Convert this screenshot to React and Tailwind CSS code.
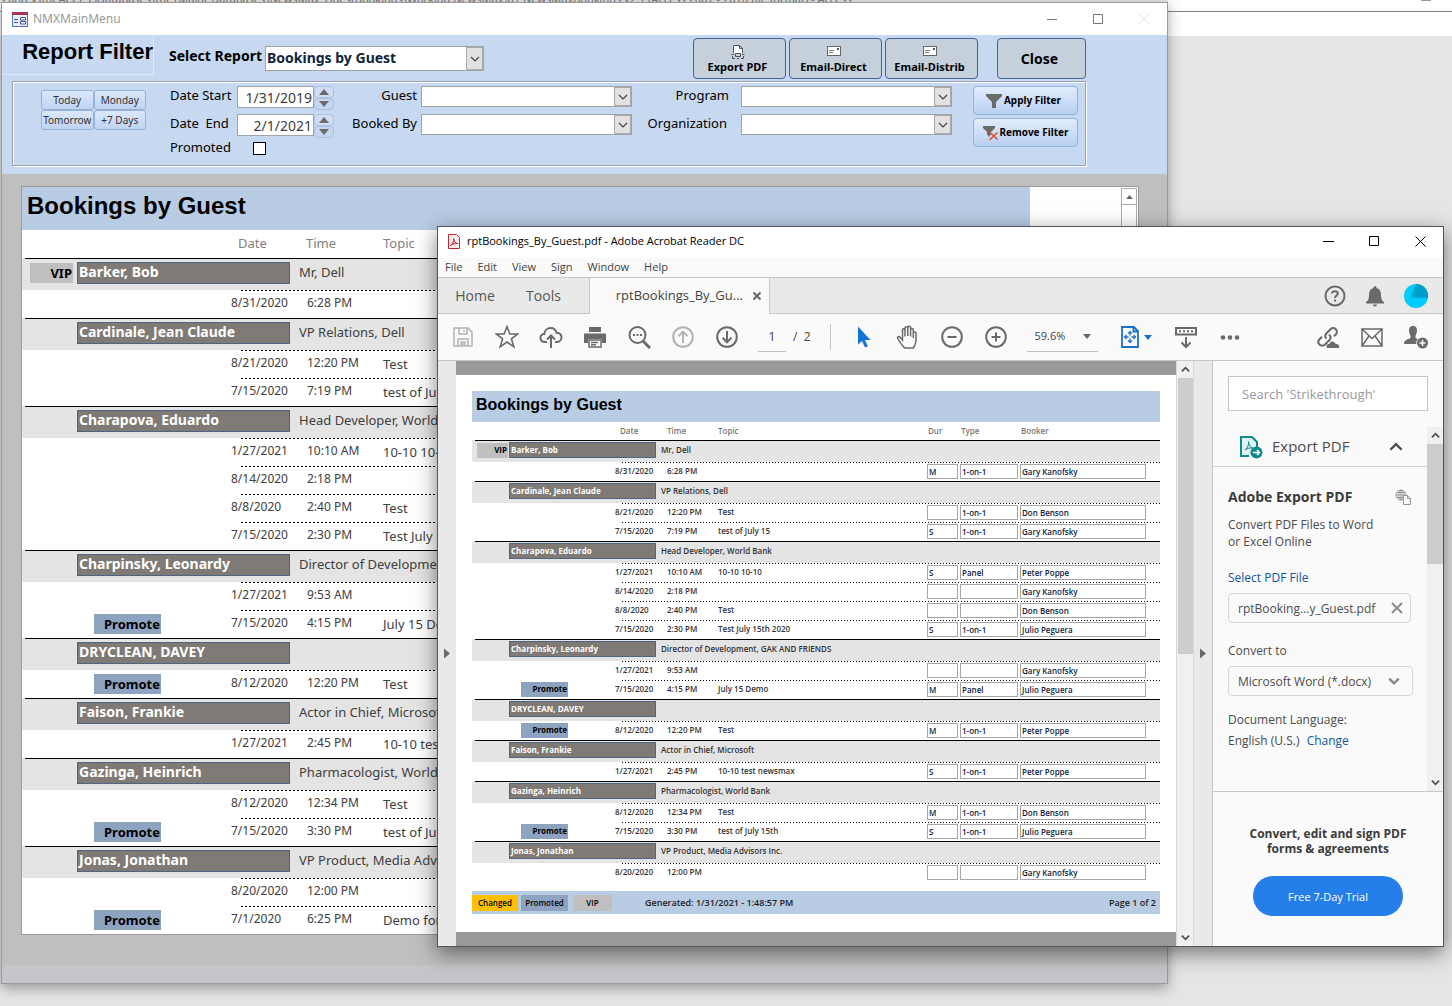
import React, { useState } from "react";

const GUESTS = [
  {
    name: "Barker, Bob",
    role: "Mr, Dell",
    vip: true,
    rows: [{ date: "8/31/2020", time: "6:28 PM", topic: "", dur: "M", type: "1-on-1", booker: "Gary Kanofsky" }],
  },
  {
    name: "Cardinale, Jean Claude",
    role: "VP Relations, Dell",
    rows: [
      { date: "8/21/2020", time: "12:20 PM", topic: "Test", dur: "", type: "1-on-1", booker: "Don Benson" },
      { date: "7/15/2020", time: "7:19 PM", topic: "test of July 15", dur: "S", type: "1-on-1", booker: "Gary Kanofsky" },
    ],
  },
  {
    name: "Charapova, Eduardo",
    role: "Head Developer, World Bank",
    rows: [
      { date: "1/27/2021", time: "10:10 AM", topic: "10-10 10-10", dur: "S", type: "Panel", booker: "Peter Poppe" },
      { date: "8/14/2020", time: "2:18 PM", topic: "", dur: "", type: "", booker: "Gary Kanofsky" },
      { date: "8/8/2020", time: "2:40 PM", topic: "Test", dur: "", type: "", booker: "Don Benson" },
      { date: "7/15/2020", time: "2:30 PM", topic: "Test July 15th 2020", dur: "S", type: "1-on-1", booker: "Julio Peguera" },
    ],
  },
  {
    name: "Charpinsky, Leonardy",
    role: "Director of Development, GAK AND FRIENDS",
    rows: [
      { date: "1/27/2021", time: "9:53 AM", topic: "", dur: "", type: "", booker: "Gary Kanofsky" },
      { date: "7/15/2020", time: "4:15 PM", topic: "July 15 Demo", dur: "M", type: "Panel", booker: "Julio Peguera", promote: true },
    ],
  },
  {
    name: "DRYCLEAN, DAVEY",
    role: "",
    rows: [{ date: "8/12/2020", time: "12:20 PM", topic: "Test", dur: "M", type: "1-on-1", booker: "Peter Poppe", promote: true }],
  },
  {
    name: "Faison, Frankie",
    role: "Actor in Chief, Microsoft",
    rows: [{ date: "1/27/2021", time: "2:45 PM", topic: "10-10 test newsmax", dur: "S", type: "1-on-1", booker: "Peter Poppe" }],
  },
  {
    name: "Gazinga, Heinrich",
    role: "Pharmacologist, World Bank",
    rows: [
      { date: "8/12/2020", time: "12:34 PM", topic: "Test", dur: "M", type: "1-on-1", booker: "Don Benson" },
      { date: "7/15/2020", time: "3:30 PM", topic: "test of July 15th", dur: "S", type: "1-on-1", booker: "Julio Peguera", promote: true },
    ],
  },
  {
    name: "Jonas, Jonathan",
    role: "VP Product, Media Advisors Inc.",
    rows: [
      { date: "8/20/2020", time: "12:00 PM", topic: "", dur: "", type: "", booker: "Gary Kanofsky" },
      { date: "7/1/2020", time: "6:25 PM", topic: "Demo for Sales", dur: "", type: "", booker: "", promote: true },
    ],
  },
];

// The first printed page stops before the last booking
const PAGE_ONE = GUESTS.map((g) => (g.name === "Jonas, Jonathan" ? { ...g, rows: g.rows.slice(0, 1) } : g));

const Chevron = ({ className, up, width = 1.5 }) => (
  <svg viewBox="0 0 10 10" className={className} fill="none" stroke="currentColor" strokeWidth={width}>
    <path d={up ? "M1 7 5 3 9 7" : "M1 3 5 7 9 3"} />
  </svg>
);

const Triangle = ({ className, d = "M0 0H10L5 6Z", box = "0 0 10 6" }) => (
  <svg viewBox={box} className={className} fill="currentColor">
    <path d={d} />
  </svg>
);

/* ---------------- ACCESS WINDOW ---------------- */

const ComboBox = ({ id, children, className = "" }) => (
  <div className={`flex border border-[#a0a4a8] bg-white ${className}`}>
    <select id={id} className="min-w-0 flex-1 appearance-none bg-white pl-px pb-0.5 text-[14px] font-bold leading-5 text-[#0f243e] outline-none">
      {children}
    </select>
    <span className="flex w-[17px] items-center justify-center border border-[#ababab] bg-[#e1e1e1] text-[#444]">
      <Chevron className="h-2.5 w-2.5" width={1.2} />
    </span>
  </div>
);

const QuickButton = ({ children }) => (
  <button className="h-5 rounded-[3px] border border-[#95b3d7] bg-gradient-to-b from-[#dce8fa] to-[#bfd3f2] text-[10px] leading-4 text-[#333]">
    {children}
  </button>
);

const ActionButton = ({ children, className }) => (
  <button className={`flex h-[41px] flex-col items-center justify-center rounded border border-[#3f6496] bg-[#c5d0da] pr-1 font-bold text-black ${className}`}>
    {children}
  </button>
);

const EnvelopeIcon = () => (
  <svg viewBox="0 0 14 10" className="mt-0.5 mb-1 h-[10px] w-[14px]">
    <rect x=".5" y=".5" width="13" height="9" fill="#fff" stroke="#666" />
    <path d="M2 4.5H7M2 6.5H6" stroke="#777" />
    <rect x="10" y="2" width="2" height="2" fill="#555" />
  </svg>
);

const DateField = ({ id, value, onStep, onChange }) => (
  <div className="flex h-[25px] items-start">
    <input id={id} value={value} onChange={onChange} className="h-[22px] w-[77px] border border-[#a0a4a8] bg-white pr-px text-right text-[14px] leading-5 text-[#404040] outline-none" />
    <div className="flex w-5 flex-col text-[#6b6b6b]">
      <button aria-label="Next day" onClick={onStep} className="flex h-3 items-center justify-center rounded-sm border border-[#a9c0e0] bg-[#d0def3]">
        <Triangle className="h-1.5 w-2.5" d="M5 0 10 6H0Z" />
      </button>
      <button aria-label="Previous day" onClick={onStep} className="flex h-3 items-center justify-center rounded-sm border border-[#a9c0e0] bg-[#c4d6f0]">
        <Triangle className="h-1.5 w-2.5" />
      </button>
    </div>
  </div>
);

const ReportForm = () => {
  const [start, setStart] = useState("1/31/2019");
  const [end, setEnd] = useState("2/1/2021");
  const [promoted, setPromoted] = useState(false);

  return (
    <div className="bg-[#c6d9f0] pb-2">
      <div className="max-w-[1084px]">
        <div className="flex h-[46px] items-start">
          <h1 className="h-10 w-[152px] shrink-0 whitespace-nowrap border-r border-b border-[#dfe9f6] text-right font-['Liberation_Sans_Narrow','Liberation_Sans',sans-serif] text-[22px] font-bold leading-[34px] text-black">
            Report Filter
          </h1>
          <label htmlFor="report" className="ml-[15px] w-24 shrink-0 whitespace-nowrap pt-[11px] text-[14px] font-bold leading-5">
            Select Report
          </label>
          <ComboBox id="report" className="mt-[11px] h-[25px] w-[219px]">
            <option>Bookings by Guest</option>
          </ComboBox>
          <div className="ml-auto flex gap-[3px] pt-[3px] text-[11px] leading-[13px]">
            <ActionButton className="w-[93px]">
              <svg viewBox="0 0 14 14" className="mb-px h-[14px] w-[14px]" fill="none" stroke="#555">
                <path d="M2.500 8V.5H8.500L11.500 3.500V8M8.500.500V3.500H11.500" fill="#fff" />
                <path d="M.5 9.500H3M11 9.500H13.500M4.500 8.500H9.500V11.500H4.500ZM1.500 11V13.500H4M12.500 11V13.500H10M6 13.500H8" />
              </svg>
              Export PDF
            </ActionButton>
            <ActionButton className="w-[93px]">
              <EnvelopeIcon />
              Email-Direct
            </ActionButton>
            <ActionButton className="w-[93px]">
              <EnvelopeIcon />
              Email-Distrib
            </ActionButton>
            <ActionButton className="ml-4 w-[89px] text-[14px]">Close</ActionButton>
          </div>
        </div>

        <div className="ml-2.5 flex h-[85px] border border-[#9aa3ad] pt-1 pl-7 shadow-[inset_1px_1px_0_#fff,1px_1px_0_#fff]">
          <div className="mt-1 grid h-10 w-[105px] shrink-0 grid-cols-2">
            <QuickButton>Today</QuickButton>
            <QuickButton>Monday</QuickButton>
            <QuickButton>Tomorrow</QuickButton>
            <QuickButton>+7 Days</QuickButton>
          </div>

          <div className="ml-6 grid shrink-0 grid-cols-[67px_97px] grid-rows-[28px_28px_20px] text-[13px] leading-[19px]">
            <label htmlFor="start">Date Start</label>
            <DateField id="start" value={start} onChange={(e) => setStart(e.target.value)} />
            <label htmlFor="end" className="whitespace-pre">Date  End</label>
            <DateField id="end" value={end} onChange={(e) => setEnd(e.target.value)} />
            <label htmlFor="promoted" className="-mt-1">Promoted</label>
            <input id="promoted" type="checkbox" checked={promoted} onChange={() => setPromoted(!promoted)} className="ml-4 h-[13px] w-[13px] appearance-none border border-black bg-white" />
          </div>

          <div className="ml-[13px] grid shrink-0 grid-cols-[70px_211px] grid-rows-[28px_28px] gap-x-1 text-right text-[13px] leading-[19px]">
            <label htmlFor="guest">Guest</label>
            <ComboBox id="guest" className="h-[21px]" />
            <label htmlFor="booked">Booked By</label>
            <ComboBox id="booked" className="h-[21px]" />
          </div>

          <div className="ml-[13px] grid shrink-0 grid-cols-[84px_211px] grid-rows-[28px_28px] gap-x-3 text-right text-[13px] leading-[19px]">
            <label htmlFor="program">Program</label>
            <ComboBox id="program" className="h-[21px]" />
            <label htmlFor="org" className="mr-0.5">Organization</label>
            <ComboBox id="org" className="h-[21px]" />
          </div>

          <div className="mr-[7px] ml-auto flex w-[105px] flex-col gap-[3px] text-[10px] font-bold">
            <button className="flex h-[29px] items-center justify-center gap-0.5 whitespace-nowrap rounded border border-[#95b3d7] bg-gradient-to-b from-[#e2ecfb] to-[#b9d0f3] pr-1">
              <svg viewBox="0 0 16 16" className="h-4 w-4" fill="#6b6b6b"><path d="M0 1H16V3L10 9V15H6V9L0 3Z" /></svg>
              Apply Filter
            </button>
            <button className="flex h-[29px] items-center justify-center gap-px whitespace-nowrap rounded border border-[#95b3d7] bg-gradient-to-b from-[#e2ecfb] to-[#b9d0f3]">
              <svg viewBox="0 0 16 16" className="h-4 w-4">
                <path d="M0 1H12V3L8 7V9L6 12L4 9V7L0 3Z" fill="#6b6b6b" />
                <path d="M6.500 7 14.500 14.500M14.500 7.500 6.500 15" stroke="#d8542f" strokeWidth="1.600" />
              </svg>
              Remove Filter
            </button>
          </div>
        </div>
      </div>
    </div>
  );
};

const ScreenReport = () => (
  <div className="mt-3 mr-[28px] ml-[19px] flex border border-[#9b9b9b] bg-white">
    <div className="min-w-0 flex-1 pr-[90px]">
      <h2 className="h-[43px] bg-[#b8cce4] pl-[5px] font-['Liberation_Sans',sans-serif] text-[24px] font-bold leading-[38px] text-black">Bookings by Guest</h2>
      <table className="w-full table-fixed border-collapse text-left text-[13px] leading-5 text-[#404040]">
        <colgroup>
          <col className="w-[55px]" />
          <col className="w-[154px]" />
          <col className="w-[68px]" />
          <col className="w-[84px]" />
          <col />
        </colgroup>
        <thead>
          <tr className="h-7 align-top text-[#7f7f7f]">
            <th /><th />
            <th className="pt-[3px] pl-[7px] font-normal">Date</th>
            <th className="pt-[3px] pl-[7px] font-normal">Time</th>
            <th className="pt-[3px] font-normal">Topic</th>
          </tr>
        </thead>
        <tbody>
          {GUESTS.map((g) => (
            <React.Fragment key={g.name}>
              <tr className="h-8 whitespace-nowrap bg-[#e4e4e4] bg-[linear-gradient(#000,#000)] bg-[length:100%_1px] bg-[position:3px_0] bg-no-repeat align-top">
                <td className="pt-[5px] pl-2">
                  {g.vip && <div className="h-5 w-[43px] bg-[#bfbfbf] pr-px text-right font-bold text-black">VIP</div>}
                </td>
                <td colSpan={2} className="pt-1 pr-[9px]">
                  <div className="h-[22px] border border-[#4f6480] bg-[#7f7a75] pl-px text-[14px] font-bold leading-[18px] text-white">{g.name}</div>
                </td>
                <td colSpan={2} className="pt-1">{g.role}</td>
              </tr>
              {g.rows.map((r) => (
                <tr key={r.date} className="h-7 whitespace-nowrap bg-[repeating-linear-gradient(90deg,#000_0_2px,transparent_2px_4px)] bg-[length:100%_1px] bg-[position:219px_0] bg-no-repeat align-top">
                  <td />
                  <td className="pt-1 pl-[17px]">
                    {r.promote && <div className="h-5 w-[67px] bg-[#8ea3c0] pr-px text-right font-bold text-black">Promote</div>}
                  </td>
                  <td className="pt-[3px] text-[12px]">{r.date}</td>
                  <td className="pt-[3px] pl-2 text-[12px]">{r.time}</td>
                  <td className="pt-1">{r.topic}</td>
                </tr>
              ))}
            </React.Fragment>
          ))}
        </tbody>
      </table>
    </div>
    <div className="m-px flex w-4 flex-col border border-[#ababab] bg-white">
      <button aria-label="Scroll up" className="flex h-4 items-center justify-center border-b border-[#ababab] text-[#606060]">
        <Triangle className="h-1 w-[7px]" d="M5 0 10 6H0Z" />
      </button>
    </div>
  </div>
);

const AccessWindow = () => (
  <section className="absolute top-0.5 right-[284px] left-px border border-[#9a9a9a] bg-[#bfbfbf] shadow-[0_4px_12px_rgba(0,0,0,0.35)]">
    <header className="flex h-8 items-center bg-white pl-2.5">
      <svg viewBox="0 0 16 15" className="h-[15px] w-4">
        <rect x=".5" y=".5" width="15" height="14" fill="#e8eefa" stroke="#5a6fae" />
        <path d="M0 1.500H16" stroke="#a8325a" strokeWidth="3" />
        <path d="M2 7.500H6M2 10.500H6" stroke="#41559c" />
        <path d="M8.500 5.500H13.500V8H8.500ZM8.500 9.500H13.500V12H8.500Z" fill="#fff" stroke="#41559c" />
      </svg>
      <span className="ml-[5px] text-[12px] text-[#999]">NMXMainMenu</span>
      <div className="mr-[18px] ml-auto flex items-center gap-9 text-[#777]">
        <button aria-label="Minimize"><svg viewBox="0 0 10 10" className="h-2.5 w-2.5" stroke="currentColor"><path d="M0 5.500H10" /></svg></button>
        <button aria-label="Maximize"><svg viewBox="0 0 10 10" className="h-2.5 w-2.5" stroke="currentColor" fill="none"><path d="M.5.5H9.500V9.500H.5Z" /></svg></button>
        <button aria-label="Close window" className="text-[#e2e2e2]"><svg viewBox="0 0 10 10" className="h-2.5 w-2.5" stroke="currentColor"><path d="M0 0 10 10M10 0 0 10" /></svg></button>
      </div>
    </header>
    <ReportForm />
    <ScreenReport />
    <div className="mt-[30px] h-[18px] bg-[#c4c6ca]" />
  </section>
);

/* ---------------- ACROBAT WINDOW ---------------- */

const Tool = ({ label, children, className = "w-11", faded }) => (
  <button aria-label={label} className={`flex shrink-0 items-center justify-center ${faded ? "text-[#b3b3b3]" : "text-[#6a6a6a]"} ${className}`}>
    <svg viewBox="0 0 24 24" className="h-6 w-6" fill="none" stroke="currentColor" strokeWidth="2">
      {children}
    </svg>
  </button>
);

const Toolbar = () => (
  <div className="flex h-[47px] items-stretch border-b border-[#c8c8c8] bg-[#fafafa] pl-[3px] text-[12px] text-[#444]">
    <Tool label="Save" faded>
      <path d="M3 3H17L21 7V21H3ZM8 3V9H16V3M7 21V14H17V21M9 17H15M9 19H15M13 5V7" strokeWidth="1.500" />
    </Tool>
    <Tool label="Bookmark">
      <path d="M12 1.500 14.800 9H22.800L16.400 13.800 18.800 21.800 12 17 5.200 21.800 7.600 13.800 1.200 9H9.200Z" strokeWidth="1.600" />
    </Tool>
    <Tool label="Upload">
      <path d="M8 17H6C3 17 1.500 15 1.500 12.800 1.500 10.500 3.300 9 5.300 9 5.500 5.300 8.300 3 11.500 3 14.600 3 16.800 4.800 17.500 7.800 20.500 7.500 22.500 9.800 22.500 12.300 22.500 15 20.500 17 18 17H16M12 23V11M8 14.500 12 10.500 16 14.500" />
    </Tool>
    <Tool label="Print">
      <path d="M6 2H18V7H6Z" fill="currentColor" stroke="none" />
      <path d="M1 8.500H23V18H19V14H5V18H1Z" fill="currentColor" stroke="none" />
      <path d="M6 15H18V22H6ZM8 17.500H15M8 19.800H13" strokeWidth="1.500" />
    </Tool>
    <Tool label="Find">
      <circle cx="10.500" cy="10" r="8" />
      <path d="M16 16 23 23" strokeWidth="3" />
      <path d="M6 10H8M9.500 10H11.500M13 10H15" />
    </Tool>
    <Tool label="Previous page" faded>
      <circle cx="12" cy="12" r="9.800" />
      <path d="M12 18V7M7.500 11.200 12 6.700 16.500 11.200" />
    </Tool>
    <Tool label="Next page">
      <circle cx="12" cy="12" r="9.800" />
      <path d="M12 6V17M7.500 12.800 12 17.300 16.500 12.800" />
    </Tool>
    <input aria-label="Page" defaultValue="1" className="mt-2 mb-2 ml-[9px] w-7 border-b border-[#c0c0c0] bg-transparent text-center outline-none" />
    <span className="ml-[7px] self-center whitespace-pre">/  2</span>
    <span className="mr-[18px] ml-[19px] my-2.5 w-px shrink-0 bg-[#c8c8c8]" />
    <Tool label="Select" className="-ml-[7px] w-11">
      <path d="M6 1.500V19.500L10 16 13 22.500 15.800 21.200 13 15H18.500Z" fill="#1473d6" stroke="none" />
    </Tool>
    <Tool label="Hand">
      <path d="M8.500 23C5 19 3.500 17 1.700 13.500 1 12 2.800 10.800 4 12.200L6.500 15V5C6.500 3.300 9 3.300 9 5V11.500 3C9 1.200 11.800 1.200 11.800 3V11 2.500C11.800.8 14.600.8 14.600 2.500V11.500 4.500C14.600 3 17.300 3 17.300 4.500V13 8C17.300 6.500 20 6.500 20 8V15C20 19 18.500 20.500 17.500 23Z" strokeWidth="1.500" />
    </Tool>
    <Tool label="Zoom out">
      <circle cx="12" cy="12" r="9.800" />
      <path d="M7.500 12H16.500" />
    </Tool>
    <Tool label="Zoom in">
      <circle cx="12" cy="12" r="9.800" />
      <path d="M7.500 12H16.500M12 7.500V16.500" />
    </Tool>
    <div className="my-2 ml-[9px] flex w-[71px] items-center border-b border-[#c0c0c0] pl-2">
      <input aria-label="Zoom level" defaultValue="59.6%" className="w-[46px] bg-transparent text-[11px] outline-none" />
      <Triangle className="ml-0.5 h-[5px] w-2 text-[#666]" />
    </div>
    <button aria-label="Fit page" className="ml-[22px] flex items-center gap-1 text-[#1b6fc8]">
      <svg viewBox="0 0 20 24" className="h-6 w-5" fill="none" stroke="currentColor" strokeWidth="1.800">
        <path d="M2 2H14L18 6V22H2ZM13.500 2V6.500H18" />
        <path d="M10 7V17M5 12H15" strokeDasharray="3.500 3" strokeWidth="1.400" />
        <path d="M8 8.500 10 6.500 12 8.500M8 15.500 10 17.500 12 15.500M6.500 10 4.500 12 6.500 14M13.500 10 15.500 12 13.500 14" strokeWidth="1.200" />
      </svg>
      <Triangle className="h-[5px] w-2" />
    </button>
    <Tool label="Read mode" className="ml-3 w-11">
      <path d="M2 3H22V9.500H2ZM5 6.200H7M9 6.200H11M13 6.200H15M17 6.200H19" />
      <path d="M12 12V22M7.500 17.500 12 22 16.500 17.500" />
    </Tool>
    <Tool label="More tools">
      <circle cx="5" cy="12.500" r="2.300" fill="currentColor" stroke="none" />
      <circle cx="12" cy="12.500" r="2.300" fill="currentColor" stroke="none" />
      <circle cx="19" cy="12.500" r="2.300" fill="currentColor" stroke="none" />
    </Tool>
    <div className="mr-[5px] ml-auto flex">
      <Tool label="Share link">
        <path d="M10.500 13.500C8.500 11.500 9 9.800 10.500 8.200L14.500 4.200C16 2.700 18.300 2.700 19.800 4.200 21.300 5.700 21.300 8 19.800 9.500L18 11.300M13 9.500C15 11.500 15 13.500 13.500 15L9 19.500C7.500 21 5 21 3.500 19.500 2 18 2 15.800 3.500 14.300L6 11.800" />
        <path d="M11 23C9.500 20 12 18.500 13.500 19 14.500 15.500 19 16 19.500 19 22 18.500 24 20.500 23 23Z" fill="currentColor" stroke="none" />
      </Tool>
      <Tool label="Send by email">
        <path d="M2 4H22V21H2ZM2 4 12 13.500 22 4M2 21 9 11M22 21 15 11" strokeWidth="1.500" />
      </Tool>
      <Tool label="Share with people">
        <path d="M9 1C12 1 13 3 13 5.500 13 8 12 9.500 11.500 10.500V13L14 14.200C12 16 12 18 12.500 19H0C0 14.500 4 14.500 6.500 13V10.500C6 9.500 5 8 5 5.500 5 3 6 1 9 1Z" fill="currentColor" stroke="none" />
        <circle cx="18.500" cy="18" r="5.500" fill="currentColor" stroke="none" />
        <path d="M18.500 15V21M15.500 18H21.500" stroke="#fafafa" strokeWidth="1.500" />
      </Tool>
    </div>
  </div>
);

const Cell = ({ children }) => (
  <div className="h-[15px] border border-[#a6a6a6] bg-white pl-px leading-[14px] text-[#0f243e]">{children}</div>
);

const PrintedPage = () => (
  <div className="bg-white px-4 pt-4 pb-[18px] font-['Open_Sans',sans-serif]">
    <h2 className="h-[31px] bg-[#b8cce4] pl-1 font-['Liberation_Sans',sans-serif] text-[16px] font-bold leading-[27px] text-black">Bookings by Guest</h2>
    <table className="w-full table-fixed border-collapse text-left text-[8px] font-semibold leading-[14px] text-[#333]">
      <colgroup>
        <col className="w-[37px]" />
        <col className="w-[106px]" />
        <col className="w-[46px]" />
        <col className="w-[57px]" />
        <col />
        <col className="w-[33px]" />
        <col className="w-[60px]" />
        <col className="w-[140px]" />
      </colgroup>
      <thead>
        <tr className="h-[18px] text-[#777]">
          <th /><th />
          <th className="pl-[5px] font-semibold">Date</th>
          <th className="pl-1.5 font-semibold">Time</th>
          <th className="font-semibold">Topic</th>
          <th className="pl-px font-semibold">Dur</th>
          <th className="pl-px font-semibold">Type</th>
          <th className="pl-px font-semibold">Booker</th>
        </tr>
      </thead>
      <tbody>
        {PAGE_ONE.map((g) => (
          <React.Fragment key={g.name}>
            <tr className="h-[22px] whitespace-nowrap bg-[#e4e4e4] bg-[linear-gradient(#000,#000)] bg-[length:100%_1px] bg-[position:3px_0] bg-no-repeat align-top">
              <td className="pt-[3px] pl-[5px]">
                {g.vip && <div className="h-[15px] w-[31px] bg-[#bfbfbf] pr-px text-right font-bold text-black">VIP</div>}
              </td>
              <td colSpan={2} className="pt-0.5 pr-[5px]">
                <div className="h-4 border border-[#4f6480] bg-[#7f7a75] pl-px font-bold text-white">{g.name}</div>
              </td>
              <td colSpan={5} className="pt-[3px]">{g.role}</td>
            </tr>
            {g.rows.map((r) => (
              <tr key={r.date} className="h-[19px] whitespace-nowrap bg-[repeating-linear-gradient(90deg,#000_0_1px,transparent_1px_3px)] bg-[length:100%_1px] bg-[position:150px_0] bg-no-repeat align-top">
                <td />
                <td className="pt-0.5 pl-3">
                  {r.promote && <div className="h-[15px] w-[47px] bg-[#8ea3c0] pr-px text-right font-bold text-black">Promote</div>}
                </td>
                <td className="pt-0.5">{r.date}</td>
                <td className="pt-0.5 pl-1.5">{r.time}</td>
                <td className="pt-0.5">{r.topic}</td>
                <td className="pt-0.5 pr-0.5"><Cell>{r.dur}</Cell></td>
                <td className="pt-0.5 pr-0.5"><Cell>{r.type}</Cell></td>
                <td className="pt-0.5 pr-3.5"><Cell>{r.booker}</Cell></td>
              </tr>
            ))}
          </React.Fragment>
        ))}
      </tbody>
    </table>
    <footer className="mt-[9px] flex h-[23px] items-center bg-[#b8cce4] pr-1 text-[9px] font-semibold text-[#222]">
      <span className="w-[46px] bg-[#ffc000] text-center text-[8px] leading-4 text-black">Changed</span>
      <span className="ml-[3px] w-[47px] bg-[#8ea3c0] text-center text-[8px] leading-4 text-black">Promoted</span>
      <span className="ml-[5px] w-[39px] bg-[#bfbfbf] text-center text-[8px] leading-4 text-black">VIP</span>
      <span className="ml-[33px]">Generated: 1/31/2021 - 1:48:57 PM</span>
      <span className="ml-auto">Page 1 of 2</span>
    </footer>
  </div>
);

const ScrollBar = ({ thumb, className = "w-4" }) => (
  <div className={`flex shrink-0 flex-col bg-[#f0f0f0] text-[#505050] ${className}`}>
    <button aria-label="Scroll up" className="flex h-[17px] items-center justify-center"><Chevron up className="h-[9px] w-[9px]" width={2} /></button>
    <div className={`bg-[#cdcdcd] ${thumb}`} />
    <button aria-label="Scroll down" className="mt-auto flex h-[17px] items-center justify-center"><Chevron className="h-[9px] w-[9px]" width={2} /></button>
  </div>
);

const SideArrow = ({ className = "w-[18px]" }) => (
  <button aria-label="Toggle pane" className={`flex shrink-0 items-center justify-center bg-[#e9e9e9] text-[#6a6a6a] ${className}`}>
    <Triangle className="h-[11px] w-1.5" d="M0 0 6 5 0 10Z" box="0 0 6 10" />
  </button>
);

const ToolsPane = () => (
  <aside className="flex w-[231px] shrink-0 flex-col border-l border-[#c8c8c8] bg-[#fafafa] text-[12px] leading-[17px] text-[#4b4b4b]">
    <div className="pt-[15px] pr-[15px] pb-4 pl-[15px]">
      <input aria-label="Search tools" placeholder="Search 'Strikethrough'" className="h-[35px] w-full border border-[#c6c6c6] bg-white pl-[13px] text-[13px] outline-none placeholder:text-[#999]" />
    </div>
    <div className="flex h-[364px]">
      <div className="flex-1">
        <button className="flex h-10 w-full items-center border-b border-[#d0d0d0] pl-[26px] text-[15px]">
          <svg viewBox="0 0 24 24" className="h-6 w-6" fill="none" stroke="#12898c" strokeWidth="2">
            <path d="M10 21H2V2H13L18 7V12" fill="#e0f2f2" />
            <path d="M6 15C9 13 10 9 9.500 6.500 9.500 10 12 13 14 13 11 12.500 8 13.500 6 15Z" strokeWidth="1" />
            <circle cx="17.500" cy="17.500" r="6" fill="#12898c" stroke="none" />
            <path d="M14 17.500H20.500M18 15 20.500 17.500 18 20" stroke="#fff" strokeWidth="1.500" />
          </svg>
          <span className="ml-[9px]">Export PDF</span>
          <Chevron up className="mr-6 ml-auto h-3.5 w-3.5" width={1.6} />
        </button>
        <div className="pl-[15px]">
          <div className="mt-[21px] flex items-center">
            <h3 className="text-[14px] font-bold leading-[18px] text-[#3c3c3c]">Adobe Export PDF</h3>
            <svg viewBox="0 0 16 16" className="mr-4 ml-auto h-4 w-4" fill="none" stroke="#999">
              <circle cx="6" cy="6" r="5" />
              <path d="M1 6H11M6 1V11M2 3.500H10M2 8.500H8M6 1C3 4 3 8 6 11M6 1C9 4 9 8 6 11" />
              <path d="M8.500 6.500H12.500L15.500 9.500V15.500H8.500ZM12.500 6.500V9.500H15.500" fill="#fafafa" />
            </svg>
          </div>
          <p className="mt-2.5">Convert PDF Files to Word<br />or Excel Online</p>
          <a href="#select" className="mt-[19px] block text-[#13569b]">Select PDF File</a>
          <div className="mt-[7px] flex h-[30px] w-[183px] items-center rounded border border-[#d8d8d8] pl-[9px]">
            rptBooking...y_Guest.pdf
            <button aria-label="Remove file" className="mr-[7px] ml-auto text-[#888]">
              <svg viewBox="0 0 12 12" className="h-3 w-3" stroke="currentColor" strokeWidth="1.800"><path d="M1 1 11 11M11 1 1 11" /></svg>
            </button>
          </div>
          <label htmlFor="format" className="mt-[19px] block">Convert to</label>
          <div className="mt-[7px] flex h-[30px] w-[185px] items-center rounded border border-[#d8d8d8] pr-3 pl-[9px]">
            <select id="format" className="min-w-0 flex-1 appearance-none bg-transparent outline-none">
              <option>Microsoft Word (*.docx)</option>
            </select>
            <Chevron className="h-3 w-3 text-[#888]" width={2} />
          </div>
          <p className="mt-[13px] leading-[21px]">
            Document Language:<br />
            English (U.S.) <a href="#language" className="ml-1 text-[#13569b]">Change</a>
          </p>
        </div>
      </div>
      <ScrollBar thumb="h-[120px]" />
    </div>
    <div className="flex flex-1 flex-col items-center border-t border-[#c8c8c8] pt-[34px] text-center">
      <p className="text-[12px] font-bold leading-[15px] text-[#3c3c3c]">Convert, edit and sign PDF<br />forms &amp; agreements</p>
      <button className="mt-5 h-10 w-[150px] rounded-full bg-[#267fe8] text-[11px] text-white">Free 7-Day Trial</button>
    </div>
  </aside>
);

const AcrobatWindow = () => (
  <section className="absolute top-[226px] right-2 left-[437px] border border-[#555] bg-white font-['Open_Sans',sans-serif] shadow-[0_6px_20px_rgba(0,0,0,0.5)]">
    <header className="flex h-[31px] items-center pl-2.5 pb-[3px] text-[12px] text-black">
      <svg viewBox="0 0 12 15" className="h-[15px] w-3" fill="none" stroke="#c9252d">
        <path d="M.5.500H8.500L11.500 3.500V14.500H.5Z" fill="#fbecec" />
        <path d="M2.500 11.500C5 10 6.300 7 5.700 4.500 5.800 7.500 7.500 9.500 9.800 9.500 7 9 4.500 10 2.500 11.500Z" />
      </svg>
      <span className="ml-[7px] text-[11px]">rptBookings_By_Guest.pdf - Adobe Acrobat Reader DC</span>
      <div className="mr-[17px] ml-auto flex items-center gap-[35px]">
        <button aria-label="Minimize"><svg viewBox="0 0 11 11" className="h-[11px] w-[11px]" stroke="currentColor"><path d="M0 5.500H11" /></svg></button>
        <button aria-label="Maximize"><svg viewBox="0 0 11 11" className="h-[11px] w-[11px]" stroke="currentColor" fill="none"><path d="M.500.500H9.500V9.500H.500Z" /></svg></button>
        <button aria-label="Close window"><svg viewBox="0 0 11 11" className="h-[11px] w-[11px]" stroke="currentColor"><path d="M.5.500 10.500 10.500M10.500.500.500 10.500" /></svg></button>
      </div>
    </header>
    <nav className="flex h-5 items-center gap-[15px] border-b border-[#c8c8c8] bg-[#f9f9f9] pl-[7px] text-[11px] text-[#444]">
      <button>File</button>
      <button>Edit</button>
      <button>View</button>
      <button>Sign</button>
      <button>Window</button>
      <button>Help</button>
    </nav>
    <div className="flex h-9 items-stretch bg-[#e9e9e9] text-[14px] text-[#555]">
      <button className="w-[74px] border-b border-[#c8c8c8]">Home</button>
      <button className="w-[77px] border-b border-[#c8c8c8] pr-3.5">Tools</button>
      <div className="flex w-[181px] items-center justify-end border-x border-[#c8c8c8] bg-[#fafafa] pr-2 text-[13px] text-[#444]">
        rptBookings_By_Gu...
        <button aria-label="Close tab" className="ml-2.5">
          <svg viewBox="0 0 8 8" className="h-2 w-2" stroke="#666" strokeWidth="2"><path d="M.5.500 7.500 7.500M7.500.500.500 7.500" /></svg>
        </button>
      </div>
      <div className="flex flex-1 items-center justify-end gap-[19px] border-b border-[#c8c8c8] pr-[15px] text-[#6a6a6a]">
        <button aria-label="Help">
          <svg viewBox="0 0 22 22" className="h-[22px] w-[22px]" fill="none" stroke="currentColor" strokeWidth="2">
            <circle cx="11" cy="11" r="9.500" />
            <path d="M8 8.500C8.300 5.500 14 5.500 13.800 8.700 13.600 10.800 11 10.500 11 13M11 14.500V16.500" />
          </svg>
        </button>
        <button aria-label="Notifications">
          <svg viewBox="0 0 20 22" className="h-[22px] w-5" fill="currentColor">
            <path d="M10 1C11 1 11.500 2 11.500 3 15 4 16 7 16 10 16 14 17 16 19 17V18.500H1V17C3 16 4 14 4 10 4 7 5 4 8.500 3 8.500 2 9 1 10 1ZM8 19.500H12C12 22 8 22 8 19.500Z" />
          </svg>
        </button>
        <button aria-label="Account">
          <svg viewBox="0 0 24 24" className="h-6 w-6">
            <circle cx="12" cy="12" r="12" fill="#00cdff" />
            <path d="M12 0A12 12 0 0 1 24 14L7 13.500Z" fill="#009fcb" />
          </svg>
        </button>
      </div>
    </div>
    <Toolbar />
    <div className="flex">
      <SideArrow />
      <div className="min-w-0 flex-1 bg-[#999] pt-3.5 pb-[14px]">
        <PrintedPage />
      </div>
      <ScrollBar thumb="ml-px h-[276px]" className="w-[17px] border-l border-[#d8d8d8]" />
      <SideArrow className="w-[19px] border-l border-[#d8d8d8]" />
      <ToolsPane />
    </div>
  </section>
);

const App = () => (
  <main className="relative min-h-screen overflow-hidden bg-[#e5e5e5] font-['Noto_Sans',sans-serif] text-black">
    <div className="flex h-3 items-start border-b border-[#808080] bg-white">
      <div className="flex h-[3px] w-[1168px] items-end overflow-hidden whitespace-nowrap bg-[#e5e5e5] text-[11px] leading-[8px] text-[#777]">
        s and V\theACCESSDatabases\theTMajor Databases\NewsMax_GuestBookings\Working NewsMax\01 NewsMaxBookings v2.1 (Access 2007 - 2016 file format) - Access
      </div>
      <span className="ml-auto mr-[21px] h-px w-2.5 bg-[#999]" />
    </div>
    <div className="h-6 bg-white" />
    <AccessWindow />
    <AcrobatWindow />
  </main>
);

export default App;
